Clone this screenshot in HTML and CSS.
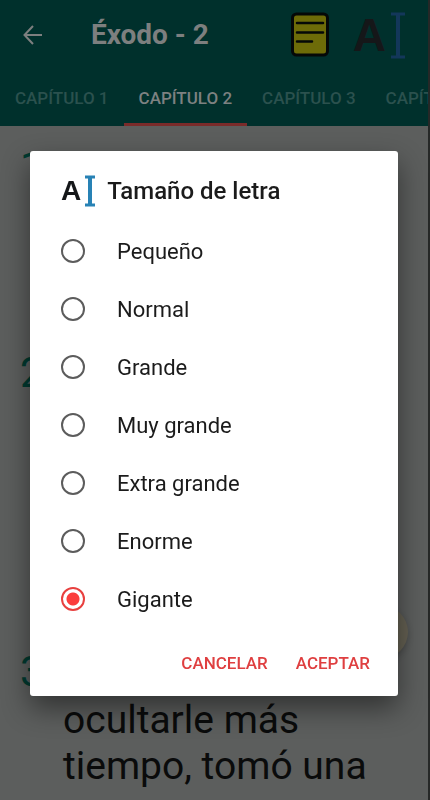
FILE: index.html
```html
<!DOCTYPE html>
<html lang="es">
<head>
<meta charset="utf-8">
<meta name="viewport" content="width=device-width, initial-scale=1">
<title>Éxodo - 2</title>
<link rel="stylesheet" href="styles.css">
</head>
<body>
<div class="page">
  <header class="header">
    <div class="toolbar">
      <button class="icon-button" type="button" aria-label="Atrás">
        <svg width="20" height="20" viewBox="0 0 20 20" fill="none" stroke="currentColor" stroke-width="2"><path d="M19 10H2M10 1L1.500 10L10 19"/></svg>
      </button>
      <h1 class="title">Éxodo - 2</h1>
      <button class="icon-button" type="button" aria-label="Notas">
        <svg width="38" height="46" viewBox="0 0 38 46" stroke="#050807" stroke-linecap="round"><rect x="1.500" y="2" width="35" height="41" rx="4" fill="#6d6b08" stroke-width="3"/><path d="M6 11H32M6 20.500H32M6 29.500H21" stroke-width="2.500"/></svg>
      </button>
      <button class="icon-button type-icon" type="button" aria-label="Tamaño de letra">
        <span>A</span>
        <svg width="14" height="47" viewBox="0 0 14 47" fill="none" stroke="#13375a"><path d="M0 2H14M0 45H14" stroke-width="3"/><path d="M7 2V45" stroke-width="4"/></svg>
      </button>
    </div>
    <nav class="tabs">
      <a class="tab" href="#c1">CAPÍTULO 1</a>
      <a class="tab active" href="#c2" aria-current="page">CAPÍTULO 2</a>
      <a class="tab" href="#c3">CAPÍTULO 3</a>
      <a class="tab" href="#c4">CAPÍTULO 4</a>
    </nav>
  </header>
  <main class="verses">
    <section class="verse short"><span class="number">1</span></section>
    <section class="verse long"><span class="number">2</span></section>
    <section class="verse"><span class="number">3</span><p class="text">ocultarle más tiempo, tomó una</p></section>
  </main>
  <div class="fab"></div>
</div>
<div class="overlay">
  <form class="dialog" role="dialog" aria-labelledby="dialog-title">
    <div class="dialog-head">
      <div class="type-icon small" aria-hidden="true">
        <span>A</span>
        <svg width="10" height="32" viewBox="0 0 10 32" fill="none" stroke="#2882b5"><path d="M0 2H10M0 30H10" stroke-width="3"/><path d="M5 2V30" stroke-width="4"/></svg>
      </div>
      <h2 class="dialog-title" id="dialog-title">Tamaño de letra</h2>
    </div>
    <label class="option"><input type="radio" name="size">Pequeño</label>
    <label class="option"><input type="radio" name="size">Normal</label>
    <label class="option"><input type="radio" name="size">Grande</label>
    <label class="option"><input type="radio" name="size">Muy grande</label>
    <label class="option"><input type="radio" name="size">Extra grande</label>
    <label class="option"><input type="radio" name="size">Enorme</label>
    <label class="option"><input type="radio" name="size" checked>Gigante</label>
    <div class="actions">
      <button class="action" type="button">CANCELAR</button>
      <button class="action" type="button">ACEPTAR</button>
    </div>
  </form>
</div>
</body>
</html>
```
FILE: styles.css
```css
* { box-sizing: border-box; }
body {
  margin: 0;
  font-family: Roboto, "Liberation Sans", sans-serif;
  background: #5c5e5d;
}
button {
  border: 0;
  padding: 0;
  background: none;
  font: inherit;
  color: inherit;
}
svg { display: block; }
.page {
  position: relative;
  height: 100vh;
  overflow: hidden;
  border-right: 2px solid #262827;
}
.header {
  background: #00302c;
  color: #7d7f7f;
}
.toolbar {
  display: flex;
  align-items: center;
  height: 70px;
  padding: 0 23px;
}
.title {
  flex: 1;
  margin: 0 0 0 48px;
  font-size: 28px;
  line-height: 32px;
  font-weight: 700;
}
.type-icon {
  display: flex;
  align-items: center;
  gap: 5px;
  font: bold 46px/46px "Liberation Sans", sans-serif;
  color: #151719;
}
.toolbar .type-icon { margin-left: 24px; }
.type-icon.small {
  gap: 4px;
  font-size: 28px;
  line-height: 32px;
}
.tabs {
  display: flex;
  height: 56px;
  overflow: hidden;
}
.tab {
  flex: none;
  padding: 0 15px;
  border-bottom: 3px solid transparent;
  font-size: 17px;
  line-height: 56px;
  font-weight: 500;
  color: #2b514e;
  text-decoration: none;
}
.tab.active {
  color: #7d8181;
  border-color: #7a2b2a;
}
.verses {
  padding: 18px 20px;
}
.verse {
  display: grid;
  grid-template-columns: 43px 1fr;
  font-size: 39px;
  line-height: 46px;
}
.verse.short { min-height: 206px; }
.verse.long { min-height: 299px; }
.number {
  font-size: 42px;
  color: #003a30;
}
.text {
  margin: 0;
  padding-top: 48px;
  color: #0a0b0b;
}
.fab {
  position: absolute;
  right: 20px;
  bottom: 141px;
  width: 54px;
  height: 54px;
  border-radius: 50%;
  background: #656153;
  box-shadow: 0 3px 6px #0003;
}
.overlay {
  position: fixed;
  inset: 0;
  display: flex;
  align-items: center;
  padding: 47px 32px 0 30px;
}
.dialog {
  flex: 1;
  padding: 24px 20px 15px 31px;
  border-radius: 3px;
  background: #fff;
  box-shadow: 0 12px 28px #0007;
}
.dialog-head {
  display: flex;
  align-items: center;
  gap: 12px;
  padding-bottom: 15px;
}
.dialog-title {
  margin: 0;
  font-size: 24px;
  line-height: 32px;
  font-weight: 500;
  color: #1b1b1b;
}
.option {
  display: flex;
  align-items: center;
  gap: 32px;
  height: 58px;
  font-size: 22px;
  color: #1b1b1b;
}
.option input {
  appearance: none;
  width: 24px;
  height: 24px;
  margin: 0;
  border: 2px solid #5c5c5c;
  border-radius: 50%;
}
.option input:checked {
  border-color: #e8403f;
  background: radial-gradient(circle, #fb3d3d 6px, #fff 7px);
}
.actions {
  display: flex;
  justify-content: flex-end;
  gap: 12px;
  padding-top: 17px;
}
.action {
  height: 36px;
  padding: 0 8px;
  font-size: 17px;
  font-weight: 500;
  color: #df3f40;
}
```
